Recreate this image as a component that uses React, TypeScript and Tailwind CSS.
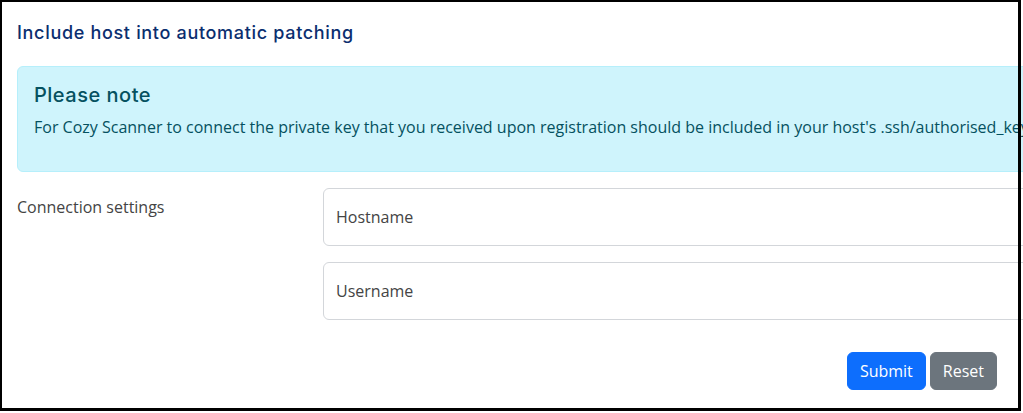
export default function App() {
  return (
    <div className="relative h-[413px] w-[1023px] overflow-hidden bg-white font-['Open_Sans',sans-serif] text-[#212529]">
      <div className="pl-[17px] pt-[20px]">
        {/* TITLE */}
        <h5 className="font-['Inter',sans-serif] text-[18px] font-medium leading-[26px] tracking-[0.68px] text-[#0b2e6f]">
          Include host into automatic patching
        </h5>

        {/* ALERT */}
        <div className="mt-[20px] w-[1100px] rounded-md border border-[#b6effb] bg-[#cff4fc] px-4 pt-4 pb-[16px] text-[#055160]">
          <h4 className="mb-2 font-['Inter',sans-serif] text-[20px] font-medium leading-6 tracking-[0.5px]">
            Please note
          </h4>
          <p className="mb-4 whitespace-nowrap text-[16px] leading-6">
            For Cozy Scanner to connect the private key that you received upon registration should be included in your host's .ssh/authorised_keys file
          </p>
        </div>

        {/* CONNECTION SETTINGS */}
        <div className="mt-[16px] flex">
          <label className="w-[306px] shrink-0 pt-[7px] text-[16px] leading-6 text-[#444]">
            Connection settings
          </label>
          <div className="flex w-[800px] shrink-0 flex-col gap-4">
            <input
              placeholder="Hostname"
              className="h-[58px] rounded-md border border-[#d3d6da] px-3 text-[16px] placeholder:text-[#444]"
            />
            <input
              placeholder="Username"
              className="h-[58px] rounded-md border border-[#d3d6da] px-3 text-[16px] placeholder:text-[#444]"
            />
          </div>
        </div>

        {/* BUTTONS */}
        <div className="mt-[32px] flex w-[980px] justify-end gap-1">
          <button className="rounded-md border border-[#0d6efd] bg-[#0d6efd] px-3 py-1.5 text-[16px] leading-6 text-white">
            Submit
          </button>
          <button className="rounded-md border border-[#6c757d] bg-[#6c757d] px-3 py-1.5 text-[16px] leading-6 text-white">
            Reset
          </button>
        </div>
      </div>

      {/* FRAME */}
      <div className="pointer-events-none absolute left-0 top-0 h-[411px] w-[1021px] border-2 border-r-[3px] border-b-[3px] border-black" />
    </div>
  );
}
